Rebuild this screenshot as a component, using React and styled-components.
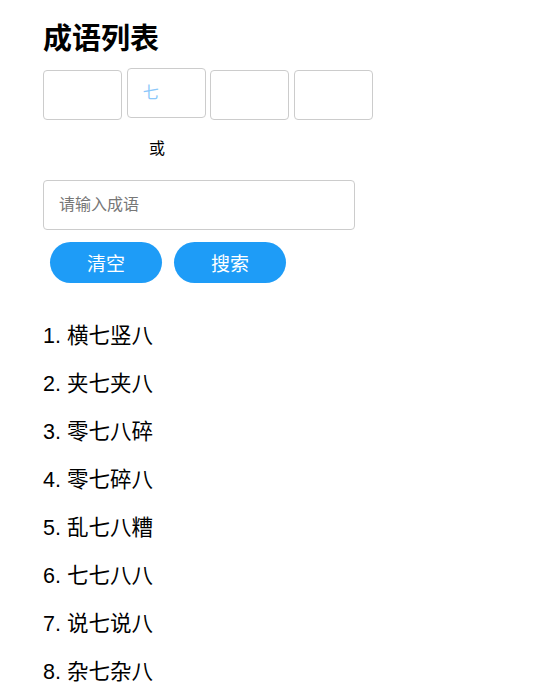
import React from 'react'
import styled, { createGlobalStyle } from 'styled-components'

const GlobalStyle = createGlobalStyle`
body {
  margin: 0;
  background: #fff;
  font-family: "Liberation Sans", "Noto Sans CJK SC", sans-serif;
}
`;

const Page = styled.div`
padding: 0 0 0 43px;
`;

const Title = styled.h1`
margin: 21px 0 0;
height: 36px;
line-height: 36px;
font-size: 29px;
font-weight: bold;
color: #000;
`;

const Boxes = styled.div`
margin-top: 11px;
display: flex;
gap: 4.67px;
align-items: flex-start;
height: 51px;
`;

const CharBox = styled.input`
box-sizing: border-box;
width: 79px;
height: 50px;
margin-top: ${p => (p.$raised ? '0' : '2px')};
padding: 0 15px;
border: 1px solid #ccc;
border-radius: 4px;
font-size: 16px;
font-family: "Liberation Sans", "Noto Sans CJK SC", sans-serif;
outline: none;
&::placeholder {
  color: #8cc8fa;
}
`;

const Or = styled.div`
margin-top: 18px;
width: 228px;
text-align: center;
line-height: 24px;
font-size: 16px;
color: #000;
`;

const SearchInput = styled.input`
box-sizing: border-box;
display: block;
margin-top: 19px;
width: 312px;
height: 50px;
padding: 0 15px;
border: 1px solid #ccc;
border-radius: 4px;
font-size: 16px;
font-family: "Liberation Sans", "Noto Sans CJK SC", sans-serif;
outline: none;
&::placeholder {
  color: #777;
}
`;

const Buttons = styled.div`
margin: 12px 0 0 7px;
display: flex;
gap: 12px;
`;

const Button = styled.button`
width: 112px;
height: 41px;
border: none;
border-radius: 21px;
background: #1e9cf7;
color: #fff;
font-size: 19px;
font-family: "Liberation Sans", "Noto Sans CJK SC", sans-serif;
cursor: pointer;
`;

const List = styled.ol`
margin: 29px 0 0;
padding: 0;
list-style: none;
`;

const Item = styled.li`
height: 48px;
line-height: 48px;
font-size: 21.5px;
color: #000;
`;

const idioms = ['横七竖八', '夹七夹八', '零七八碎', '零七碎八', '乱七八糟', '七七八八', '说七说八', '杂七杂八'];

const App = () => {
  return <Page>
    <GlobalStyle />
    <Title>成语列表</Title>
    <Boxes>
      <CharBox />
      <CharBox $raised placeholder="七" />
      <CharBox />
      <CharBox />
    </Boxes>
    <Or>或</Or>
    <SearchInput placeholder="请输入成语" />
    <Buttons>
      <Button>清空</Button>
      <Button>搜索</Button>
    </Buttons>
    <List>
      {idioms.map((w, i) => <Item key={w}>{i + 1}. {w}</Item>)}
    </List>
  </Page>
}

export default App;
